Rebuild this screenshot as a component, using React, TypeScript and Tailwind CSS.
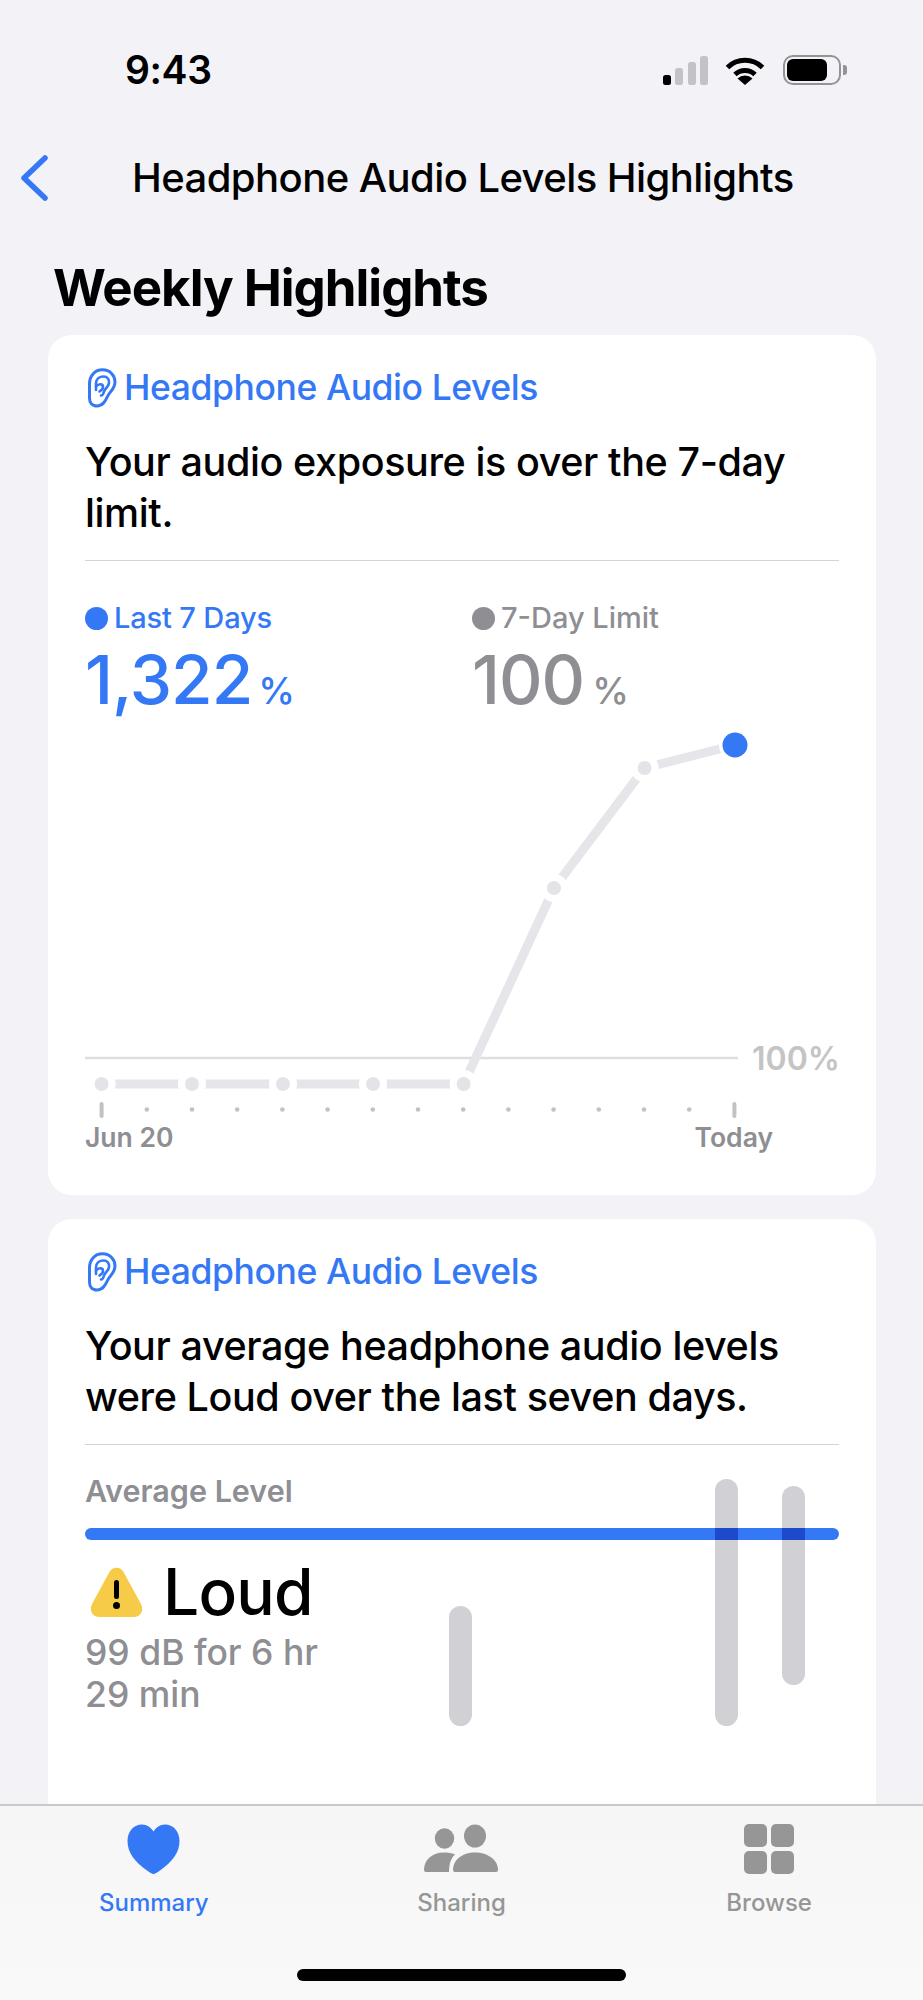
import React from "react";

const blue = "#3478f6";

function EarIcon() {
  return (
    <svg width="30" height="40" viewBox="0 0 30 40" fill="none" stroke={blue} strokeWidth="3" strokeLinecap="round" strokeLinejoin="round" className="shrink-0 ml-[2px]">
      <path d="M2.5 16C2.5 7.5 8 1.8 15.5 1.8C23 1.8 28 7.5 28 14C28 21 23 23 20.5 28.5C18 34 15.5 38 10 38C5 38 2.5 34.5 2.5 30Z" />
      <path d="M9 22V15.5C9 11 12.5 8.5 16.5 8.5C20.5 8.5 22.5 11.5 22 15C21.5 19 18 20.5 17 23.5C16.5 25.5 15.5 27.5 14 27.5" strokeWidth="2.6" />
      <path d="M9 18.5C11.5 15.5 16 15.5 16 19C16 21.5 14 22.5 12.5 23.5" strokeWidth="2.6" />
    </svg>
  );
}

function StatusIcons() {
  return (
    <div className="flex items-center gap-[17px]">
      <div className="flex items-end gap-[4.5px] h-[29px]">
        <div className="w-[8px] h-[10px] rounded-[2.5px] bg-black" />
        <div className="w-[8px] h-[17px] rounded-[2.5px] bg-[#c3c3c7]" />
        <div className="w-[8px] h-[23px] rounded-[2.5px] bg-[#c3c3c7]" />
        <div className="w-[8px] h-[29px] rounded-[2.5px] bg-[#c3c3c7]" />
      </div>
      <svg width="40" height="29" viewBox="0 0 40 29" fill="none">
        <path d="M2.5 11.5A25 25 0 0 1 37.5 11.5" stroke="#000" strokeWidth="5" />
        <path d="M10 18.5A14.5 14.5 0 0 1 30 18.5" stroke="#000" strokeWidth="5" />
        <path d="M20 29L12.5 22.5A11 11 0 0 1 27.5 22.5Z" fill="#000" />
      </svg>
      <div className="flex items-center gap-[2px] ml-[1px]">
        <div className="w-[58px] h-[30px] rounded-[10px] border-[2px] border-[#949498] p-[2px] flex">
          <div className="w-[40px] h-full rounded-[6px] bg-black" />
        </div>
        <div className="w-[4px] h-[10px] rounded-r-[3px] bg-[#949498]" />
      </div>
    </div>
  );
}

function Chart() {
  const points = [
    [101.6, 1084],
    [192, 1084],
    [283, 1084],
    [373, 1084],
    [463.6, 1084],
    [554, 888],
    [644.6, 768],
  ];
  const path = [...points, [735, 745]].map((p) => p.join(",")).join(" ");
  const ticks = Array.from({ length: 15 }, (_, i) => 101.6 + i * 45.2);

  return (
    <svg width="760" height="404" viewBox="85 716 760 404" className="block">
      <line x1="85" y1="1058" x2="738" y2="1058" stroke="#dedee0" strokeWidth="2.5" />
      <polyline points={path} fill="none" stroke="#e5e5ea" strokeWidth="9" />
      {points.map(([x, y]) => (
        <g key={x}>
          <circle cx={x} cy={y} r="14" fill="#fff" />
          <circle cx={x} cy={y} r="7" fill="#e3e3e8" />
        </g>
      ))}
      <circle cx="735" cy="745" r="16" fill="#fff" />
      <circle cx="735" cy="745" r="12.5" fill={blue} />
      {ticks.map((x, i) =>
        i === 0 || i === 14 ? (
          <rect key={x} x={x - 2} y="1102" width="4" height="16" rx="2" fill="#c2c2c6" />
        ) : (
          <circle key={x} cx={x} cy="1109.5" r="2.3" fill="#c2c2c6" />
        )
      )}
      <text x="752" y="1070" fontSize="32" fontWeight="600" fill="#c4c4c6" fontFamily="Inter, sans-serif">
        100%
      </text>
    </svg>
  );
}

function CardHeader({ body }: { body: string }) {
  return (
    <>
      <div className="flex items-center gap-[7px] h-[44px] text-[35.5px] font-[550] tracking-[-0.012em] text-[#3478f6]">
        <EarIcon />
        <span>Headphone Audio Levels</span>
      </div>
      <p className="mt-[27px] text-[39.5px] leading-[51px] font-[550] tracking-[-0.01em] text-black">{body}</p>
      <div className="mt-[21px] h-[1px] bg-[#d4d4d8]" />
    </>
  );
}

function TabItem({ label, color, children }: { label: string; color: string; children: React.ReactNode }) {
  return (
    <div className="flex flex-col items-center">
      <div className="h-[50px] flex items-center">{children}</div>
      <span className="mt-[13px] text-[24px] leading-[32px] font-medium" style={{ color }}>
        {label}
      </span>
    </div>
  );
}

function LevelBar({ className, crossAt }: { className: string; crossAt?: string }) {
  return (
    <div className={`absolute w-[23px] rounded-full bg-[#d0d0d5] overflow-hidden ${className}`}>
      {crossAt && <div className={`absolute left-0 w-full h-[12px] bg-[#1c4acb] ${crossAt}`} />}
    </div>
  );
}

export default function App() {
  return (
    <div className="w-[923px] h-[2000px] flex flex-col overflow-hidden bg-[#f2f2f7] font-['Inter',sans-serif]">
      <div className="h-[140px] shrink-0 flex items-center justify-between pl-[125px] pr-[76px]">
        <span className="text-[39px] font-semibold tracking-[-0.01em] text-black">9:43</span>
        <StatusIcons />
      </div>

      <div className="h-[76px] shrink-0 flex items-center pl-[19px]">
        <svg width="30" height="46" viewBox="0 0 30 46" fill="none" stroke={blue} strokeWidth="5.5" strokeLinecap="round" strokeLinejoin="round">
          <path d="M26 3L5 23L26 43" />
        </svg>
        <h1 className="ml-[83px] text-[40px] font-[550] tracking-[-0.014em] whitespace-nowrap text-black">Headphone Audio Levels Highlights</h1>
      </div>

      <div className="h-[119px] shrink-0 pt-[44px] pl-[53px]">
        <h2 className="text-[51px] leading-[56px] font-bold tracking-[-0.02em] text-black">Weekly Highlights</h2>
      </div>

      <div className="flex-1 min-h-0 flex flex-col gap-[24px] ml-[48px] mr-[47px]">
        <section className="h-[860px] shrink-0 rounded-[24px] bg-white px-[37px] pt-[31px]">
          <CardHeader body="Your audio exposure is over the 7-day limit." />

          <div className="mt-[39px] flex">
            <div className="w-[387px]">
              <div className="flex items-center gap-[6px] h-[36px] text-[29px] font-[550] tracking-[-0.005em] text-[#3478f6]">
                <div className="w-[23px] h-[23px] rounded-full bg-[#3478f6]" />
                Last 7 Days
              </div>
              <div className="mt-[8px] h-[72px] flex items-baseline gap-[6px] text-[#3478f6]">
                <span className="text-[67.5px] leading-[72px] font-[550] tracking-[-0.015em]">1,322</span>
                <span className="text-[37px] font-medium">%</span>
              </div>
            </div>
            <div>
              <div className="flex items-center gap-[6px] h-[36px] text-[29px] font-[550] text-[#8e8e93]">
                <div className="w-[23px] h-[23px] rounded-full bg-[#8e8e93]" />
                7-Day Limit
              </div>
              <div className="mt-[8px] h-[72px] flex items-baseline gap-[8px] text-[#8e8e93]">
                <span className="text-[67.5px] leading-[72px] font-[550] tracking-[-0.015em]">100</span>
                <span className="text-[37px] font-medium">%</span>
              </div>
            </div>
          </div>

          <Chart />
          <div className="h-[36px] flex items-center justify-between pr-[66px] text-[26.5px] font-semibold text-[#8e8e93]">
            <span>Jun 20</span>
            <span>Today</span>
          </div>
        </section>

        <section className="relative flex-1 rounded-t-[24px] bg-white px-[37px] pt-[31px]">
          <CardHeader body="Your average headphone audio levels were Loud over the last seven days." />

          <div className="mt-[28px] h-[36px] flex items-center text-[30.5px] font-semibold text-[#8e8e93]">Average Level</div>
          <div className="mt-[19px] h-[12px] rounded-full bg-[#3478f6]" />

          <div className="mt-[17px] h-[70px] flex items-center gap-[20px] pl-[5px]">
            <svg width="53" height="50" viewBox="0 0 53 50" className="shrink-0">
              <path d="M20 4C23 -0.5 30 -0.5 33 4L51 37C54 43 51 50 44 50H9C2 50 -1 43 2 37Z" fill="#f6cb47" />
              <rect x="24" y="13" width="5" height="19" rx="2.5" fill="#000" />
              <circle cx="26.5" cy="38.5" r="3.5" fill="#000" />
            </svg>
            <span className="text-[64px] leading-[70px] font-[550] tracking-[-0.012em] text-black">Loud</span>
          </div>
          <p className="mt-[5px] w-[260px] text-[35.5px] leading-[42px] font-[550] text-[#8e8e93]">99 dB for 6 hr 29 min</p>

          {/* bars sit over the level line */}
          <LevelBar className="left-[401px] top-[387px] h-[120px]" />
          <LevelBar className="left-[667px] top-[260px] h-[247px]" crossAt="top-[49px]" />
          <LevelBar className="left-[734px] top-[267px] h-[199px]" crossAt="top-[42px]" />
        </section>
      </div>

      <nav className="h-[196px] shrink-0 border-t-[2px] border-[#c9c9cb] bg-gradient-to-b from-[#f6f6f6] to-[#f9f9f9] relative">
        <div className="grid grid-cols-3 pt-[18px]">
          <TabItem label="Summary" color="#3478f6">
            <svg width="53" height="50" viewBox="0 0 53 50">
              <path d="M26.5 50C25 50 23 48.5 20 46.5C8 38 .5 29 .5 17C.5 7 7 .5 15 .5C20 .5 24 3.5 26.5 7.5C29 3.5 33 .5 38 .5C46 .5 52.5 7 52.5 17C52.5 29 45 38 33 46.5C30 48.5 28 50 26.5 50Z" fill={blue} />
            </svg>
          </TabItem>
          <TabItem label="Sharing" color="#969696">
            <svg width="74" height="50" viewBox="0 0 74 50">
              <ellipse cx="51" cy="12" rx="11" ry="11.5" fill="#969696" />
              <ellipse cx="20.5" cy="14.5" rx="9.7" ry="10.3" fill="#969696" />
              <path d="M29 46C29 36 38 28.5 51 28.5C64 28.5 74 36 74 46Q74 48 72 48H31Q29 48 29 46Z" fill="#969696" />
              <path d="M0 46C0 36 8 28.5 20 28.5C24 28.5 28 29 31 30.5C27 34 25 40 25 48H2Q0 48 0 46Z" fill="#969696" />
            </svg>
          </TabItem>
          <TabItem label="Browse" color="#969696">
            <div className="grid grid-cols-2 gap-[4px] w-[50px] h-[50px]">
              <div className="rounded-[5px] bg-[#969696]" />
              <div className="rounded-[5px] bg-[#969696]" />
              <div className="rounded-[5px] bg-[#969696]" />
              <div className="rounded-[5px] bg-[#969696]" />
            </div>
          </TabItem>
        </div>
        <div className="absolute left-[297px] top-[163px] w-[329px] h-[12px] rounded-full bg-black" />
      </nav>
    </div>
  );
}
